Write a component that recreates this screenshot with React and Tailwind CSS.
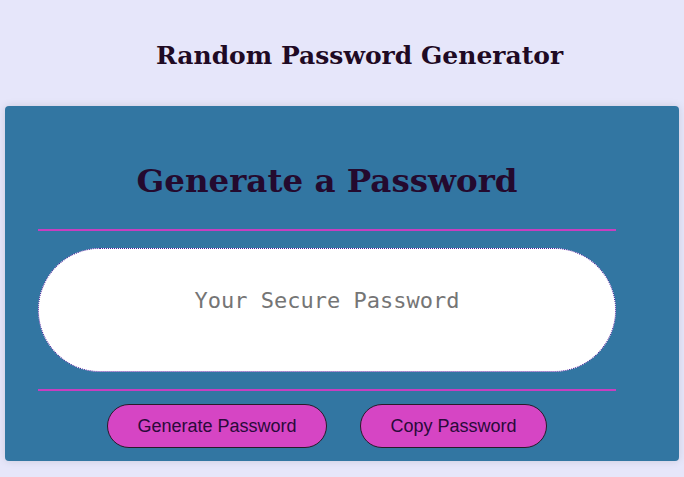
export default function App() {
  return (
    <div className="min-h-[477px] bg-[#e6e6fa] pt-[38px] pb-4">
      <h1 className="pl-[35px] text-center text-[25px] font-bold leading-[36px] text-[#1f0a24] font-['DejaVu_Serif',serif]">
        Random Password Generator
      </h1>
      <div className="mx-[5px] mt-[32px] flex h-[355px] flex-col items-center rounded-[4px] bg-[#3276a2] pr-[30px] shadow-[0_0_8px_rgba(0,0,0,0.12)]">
        <h2 className="mt-[53px] text-[32.5px] font-bold leading-[44px] text-[#240a2e] font-['DejaVu_Serif',serif]">
          Generate a Password
        </h2>
        <div className="mt-[26px] h-[2px] w-[578px] bg-[#c83ec0]" />
        <div className="mt-[17px] flex h-[124px] w-[578px] justify-center rounded-[62px] border border-dotted border-[#4a1a9a] bg-white pt-[38px]">
          <span className="text-[22px] leading-[28px] text-[#757575] font-['DejaVu_Sans_Mono',monospace]">Your Secure Password</span>
        </div>
        <div className="mt-[17px] h-[2px] w-[578px] bg-[#c83ec0]" />
        <div className="mt-[13px] flex gap-[33px]">
          <button className="h-[44px] w-[220px] rounded-[22px] border border-[#2a1a2a] bg-[#d645c4] text-[18px] text-[#2a0a3a] font-['Liberation_Sans',sans-serif]">
            Generate Password
          </button>
          <button className="h-[44px] w-[187px] rounded-[22px] border border-[#2a1a2a] bg-[#d645c4] text-[18px] text-[#2a0a3a] font-['Liberation_Sans',sans-serif]">
            Copy Password
          </button>
        </div>
      </div>
    </div>
  );
}
